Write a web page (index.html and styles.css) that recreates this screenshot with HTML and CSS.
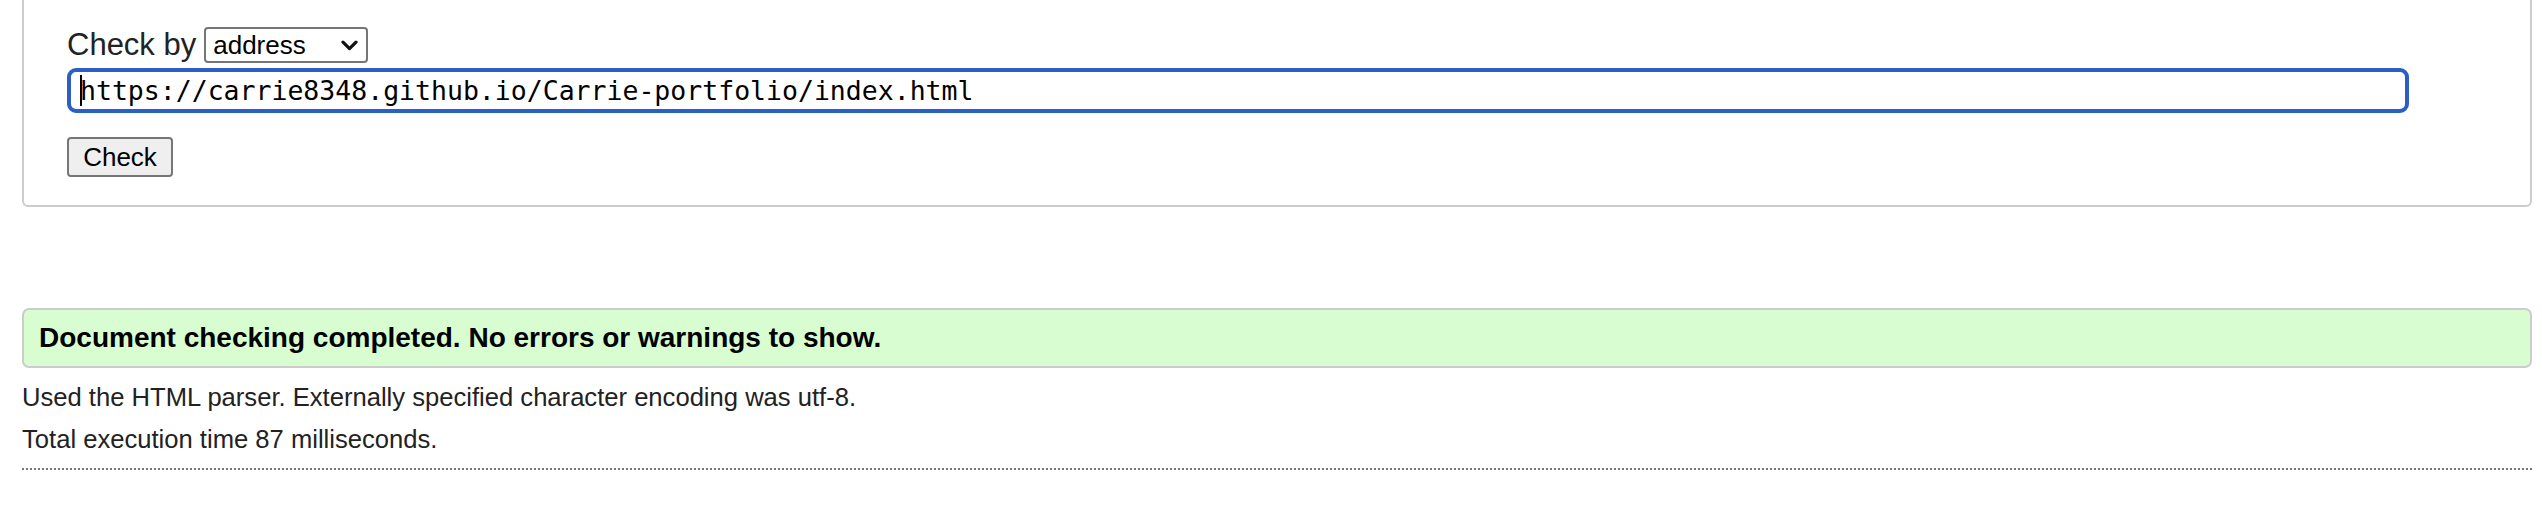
FILE: index.html
```html
<!DOCTYPE html>
<html lang="en">
<head>
<meta charset="utf-8">
<title>Nu Html Checker</title>
<link rel="stylesheet" href="styles.css">
</head>
<body>
<div class="page">
  <form class="checker">
    <div class="check-row">
      <span class="check-label">Check by</span>
      <span class="select">
        <span class="select-value">address</span>
        <svg class="chev" width="17" height="11" viewBox="0 0 17 11"><path d="M2 2.2 L8.5 8.6 L15 2.2" fill="none" stroke="#111" stroke-width="3.2" stroke-linecap="round" stroke-linejoin="round"/></svg>
      </span>
    </div>
    <div class="url-box"><span class="caret"></span><span class="url-text">https://carrie8348.github.io/Carrie-portfolio/index.html</span></div>
    <div class="btn-row"><button type="button" class="check-btn">Check</button></div>
  </form>

  <div class="success">Document checking completed. No errors or warnings to show.</div>
  <p class="details">Used the HTML parser. Externally specified character encoding was utf-8.</p>
  <p class="details">Total execution time 87 milliseconds.</p>
  <div class="rule"></div>
</div>
</body>
</html>
```
FILE: styles.css
```css
html, body {
  margin: 0;
  padding: 0;
  background: #fff;
}
body {
  overflow: hidden;
  font-family: "Liberation Sans", Arial, sans-serif;
  color: #222;
}
.page {
  padding: 0 10px 0 22px;
}
.checker {
  margin-top: -20px;
  border: 2px solid #cccccc;
  border-radius: 6px;
  padding: 45px 20px 28px 43px;
}
.check-row {
  display: flex;
  align-items: center;
  height: 36px;
  gap: 8px;
}
.check-label {
  font-size: 31px;
  color: #222;
}
.select {
  box-sizing: border-box;
  width: 164px;
  height: 36px;
  border: 2px solid #767676;
  border-radius: 4px;
  display: flex;
  align-items: center;
  justify-content: space-between;
  padding: 0 8px 0 7px;
  font-size: 26px;
  color: #000;
}
.select-value {
  line-height: 30px;
}
.chev {
  display: block;
}
.url-box {
  box-sizing: border-box;
  margin-top: 5px;
  width: 2342px;
  height: 45px;
  border: 4px solid #2b5fc4;
  border-radius: 9px;
  display: flex;
  align-items: center;
  padding-left: 9px;
  font-family: "DejaVu Sans Mono", "Liberation Mono", monospace;
  font-size: 26.5px;
  color: #000;
}
.caret {
  width: 2px;
  height: 31px;
  background: #000;
  margin-right: -2px;
}
.url-text {
  white-space: pre;
}
.btn-row {
  margin-top: 24px;
}
.check-btn {
  box-sizing: border-box;
  height: 40px;
  width: 106px;
  padding: 0;
  margin: 0;
  font-family: "Liberation Sans", Arial, sans-serif;
  font-size: 26px;
  color: #000;
  background: #efefef;
  border: 2px solid #767676;
  border-radius: 4px;
}
.success {
  margin-top: 101px;
  box-sizing: border-box;
  height: 60px;
  border: 2px solid #cccccc;
  border-radius: 7px;
  background: #d7fdd1;
  padding-left: 15px;
  display: flex;
  align-items: center;
  font-size: 28px;
  font-weight: bold;
  color: #000;
}
.details {
  margin: 0;
  font-size: 25.6px;
  line-height: 42px;
  color: #222;
}
.success + .details {
  margin-top: 8px;
}
.rule {
  margin-top: 8px;
  border-top: 2px dotted #777;
}
```
